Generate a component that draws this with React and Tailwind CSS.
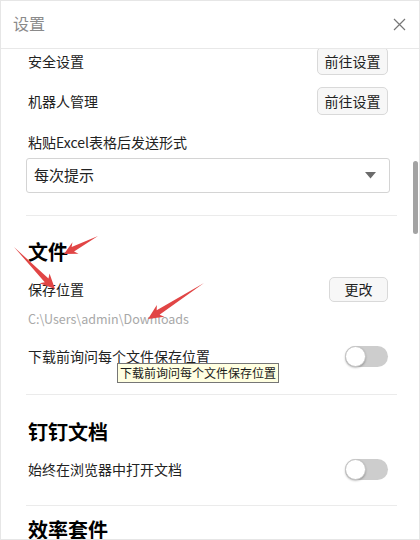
import React from "react";

const FONT = { fontFamily: '"Microsoft YaHei", "Noto Sans CJK SC", "Noto Sans", sans-serif' };

// arrow polygon: thin tail widening to a barbed head at the tip
const arrowPoints = ([tx, ty], [hx, hy], head = 13, barb = 6.5, neck = 2.6) => {
  const dx = hx - tx;
  const dy = hy - ty;
  const len = Math.hypot(dx, dy);
  const ux = dx / len;
  const uy = dy / len;
  const px = -uy;
  const py = ux;
  const bx = hx - ux * head;
  const by = hy - uy * head;
  const nx = hx - ux * (head - 3);
  const ny = hy - uy * (head - 3);
  const pts = [
    [tx, ty],
    [nx + px * neck, ny + py * neck],
    [bx + px * barb, by + py * barb],
    [hx, hy],
    [bx - px * barb, by - py * barb],
    [nx - px * neck, ny - py * neck],
  ];
  return pts.map((p) => p.join(",")).join(" ");
};

const GhostButton = ({ children, className = "" }) => (
  <button
    className={`rounded-[5px] border border-[#d9d9d9] bg-[#f7f7f7] text-[14px] text-[#222] ${className}`}
  >
    {children}
  </button>
);

const Toggle = () => (
  <div className="relative w-[43px] h-[21px] rounded-full bg-[#cdcdcd]">
    <div className="absolute left-0 top-0 w-[21px] h-[21px] rounded-full bg-white border border-[#c4c4c4] shadow-[0_1px_2px_rgba(0,0,0,0.25)]" />
  </div>
);

const Divider = ({ className = "" }) => <div className={`h-px bg-[#ebebeb] ${className}`} />;

export default function App() {
  return (
    <div
      style={FONT}
      className="relative w-[420px] h-[540px] overflow-hidden bg-white border border-[#e6e6e6] flex flex-col"
    >
      {/* header */}
      <div className="h-[48px] shrink-0 flex items-center justify-between pl-[12px] pr-[13px] border-b border-[#e8e8e8] bg-white z-10">
        <span className="text-[16px] text-[#8a8a8a] -mt-[3px]">设置</span>
        <svg width="13" height="13" viewBox="0 0 13 13" className="-mt-px">
          <path d="M1 1L12 12M12 1L1 12" stroke="#777" strokeWidth="1.2" fill="none" />
        </svg>
      </div>

      {/* scrolled settings list */}
      <div className="relative flex-1 overflow-hidden">
        <div className="-mt-[8px] pl-[25px] pr-[22px] text-[14px] text-[#222]">
          <div className="h-[40px] flex items-center justify-between pl-[2px] pr-[9px]">
            <span>安全设置</span>
            <GhostButton className="w-[71px] h-[28px]">前往设置</GhostButton>
          </div>
          <div className="h-[40px] flex items-center justify-between pl-[2px] pr-[9px]">
            <span>机器人管理</span>
            <GhostButton className="w-[71px] h-[28px]">前往设置</GhostButton>
          </div>

          <div className="mt-[10px] h-[22px] leading-[22px] pl-[2px]">粘贴Excel表格后发送形式</div>
          <div className="mt-[5px] mr-[7px] h-[35px] flex items-center justify-between rounded-[3px] border border-[#d4d4d4] pl-[7px] pr-[13px]">
            <span className="text-[15px]">每次提示</span>
            <svg width="11" height="7" viewBox="0 0 11 7">
              <path d="M0 0H11L5.5 6.5Z" fill="#6b6b6b" />
            </svg>
          </div>

          <Divider className="mt-[22px]" />

          <div className="mt-[22px] h-[28px] leading-[28px] pl-[2px] text-[20px] font-bold text-black">文件</div>
          <div className="mt-[9px] h-[28px] flex items-center justify-between pl-[2px] pr-[9px]">
            <span>保存位置</span>
            <GhostButton className="w-[59px] h-[25px]">更改</GhostButton>
          </div>
          <div className="mt-[7px] h-[18px] leading-[18px] pl-[2px] text-[12.5px] text-[#a8a8a8]">
            C:\Users\admin\Downloads
          </div>
          <div className="mt-[8px] h-[40px] flex items-center justify-between pl-[2px] pr-[9px]">
            <span>下载前询问每个文件保存位置</span>
            <Toggle />
          </div>

          <Divider className="mt-[18px]" />

          <div className="mt-[23px] h-[28px] leading-[28px] pl-[2px] text-[20px] font-bold text-black">钉钉文档</div>
          <div className="mt-[3px] h-[40px] flex items-center justify-between pl-[2px] pr-[9px]">
            <span>始终在浏览器中打开文档</span>
            <Toggle />
          </div>

          <Divider className="mt-[16px]" />

          <div className="mt-[10px] h-[28px] leading-[28px] pl-[2px] text-[20px] font-bold text-black">效率套件</div>
        </div>

        {/* scrollbar thumb */}
        <div className="absolute right-[1px] top-[112px] w-[5px] h-[73px] rounded-full bg-[#a3a3a3]" />
      </div>

      {/* native tooltip */}
      <div className="absolute left-[116px] top-[362px] h-[20px] px-[2px] flex items-center whitespace-nowrap border border-[#767676] bg-[#ffffe1] text-[12px] text-[#1a1a1a] leading-none">
        下载前询问每个文件保存位置
      </div>

      {/* red annotation arrows */}
      <svg className="absolute inset-0 pointer-events-none" width="420" height="540">
        <polygon points={arrowPoints([97, 235], [63, 253])} fill="#e14545" />
        <polygon points={arrowPoints([13, 246], [54, 288], 15, 7)} fill="#e14545" />
        <polygon points={arrowPoints([203, 282], [147, 318], 15, 7)} fill="#e14545" />
      </svg>
    </div>
  );
}
